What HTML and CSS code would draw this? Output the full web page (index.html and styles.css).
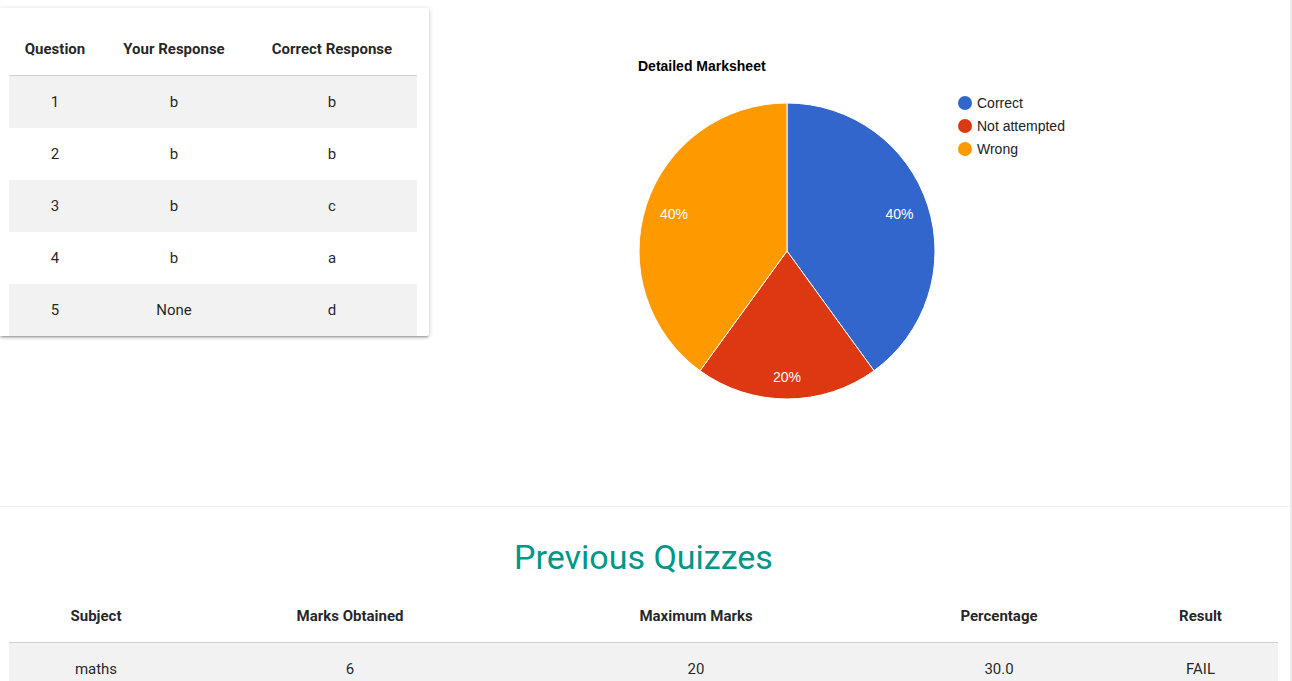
FILE: index.html
```html
<!DOCTYPE html>
<html>
<head>
<meta charset="utf-8">
<title>Result</title>
<link rel="stylesheet" href="styles.css">
</head>
<body>
<div class="page">
  <section class="top">
    <div class="card">
      <table class="qtable">
        <colgroup><col class="c1"><col class="c2"><col class="c3"></colgroup>
        <thead>
          <tr><th>Question</th><th>Your Response</th><th>Correct Response</th></tr>
        </thead>
        <tbody>
          <tr class="odd"><td>1</td><td>b</td><td>b</td></tr>
          <tr><td>2</td><td>b</td><td>b</td></tr>
          <tr class="odd"><td>3</td><td>b</td><td>c</td></tr>
          <tr><td>4</td><td>b</td><td>a</td></tr>
          <tr class="odd"><td>5</td><td>None</td><td>d</td></tr>
        </tbody>
      </table>
    </div>
    <div class="chart">
      <svg class="chart-svg" width="861" height="500" viewBox="0 0 861 500">
        <text class="ch-title" x="209" y="71">Detailed Marksheet</text>
        <g stroke="#ffffff" stroke-width="1">
          <path d="M358 251 L358 103 A148 148 0 0 1 444.99 370.73 Z" fill="#3366cc"/>
          <path d="M358 251 L444.99 370.73 A148 148 0 0 1 271.01 370.73 Z" fill="#dc3912"/>
          <path d="M358 251 L271.01 370.73 A148 148 0 0 1 358 103 Z" fill="#ff9900"/>
        </g>
        <text class="ch-pct" x="470.5" y="219" text-anchor="middle">40%</text>
        <text class="ch-pct" x="358" y="382" text-anchor="middle">20%</text>
        <text class="ch-pct" x="245" y="219" text-anchor="middle">40%</text>
        <circle cx="536" cy="103" r="7" fill="#3366cc"/>
        <circle cx="536" cy="126" r="7" fill="#dc3912"/>
        <circle cx="536" cy="149" r="7" fill="#ff9900"/>
        <text class="ch-leg" x="548" y="108">Correct</text>
        <text class="ch-leg" x="548" y="131">Not attempted</text>
        <text class="ch-leg" x="548" y="154">Wrong</text>
      </svg>
    </div>
  </section>
  <section class="bottom">
    <h4 class="heading">Previous Quizzes</h4>
    <table class="ptable">
      <colgroup><col class="p1"><col class="p2"><col class="p3"><col class="p4"><col class="p5"></colgroup>
      <thead>
        <tr><th>Subject</th><th>Marks Obtained</th><th>Maximum Marks</th><th>Percentage</th><th>Result</th></tr>
      </thead>
      <tbody>
        <tr class="odd"><td>maths</td><td>6</td><td>20</td><td>30.0</td><td>FAIL</td></tr>
      </tbody>
    </table>
  </section>
</div>
</body>
</html>
```
FILE: styles.css
```css
html, body {
  margin: 0;
  padding: 0;
  background: #ffffff;
}
body {
  font-family: Roboto, "Liberation Sans", sans-serif;
  color: rgba(0, 0, 0, 0.87);
  overflow: hidden;
}
.page {
  width: 1290px;
  border-right: 2px solid #ededed;
  min-height: 681px;
}
.top {
  display: flex;
  align-items: flex-start;
  height: 506px;
  border-bottom: 1px solid #f1f1f1;
}
.card {
  margin-top: 8px;
  width: 408px;
  padding: 15px 12px 0 9px;
  background: #fff;
  border-radius: 0 2px 2px 0;
  box-shadow: 0 2px 2px 0 rgba(0,0,0,.14), 0 3px 1px -2px rgba(0,0,0,.12), 0 1px 5px 0 rgba(0,0,0,.2);
  flex: none;
}
table {
  border-collapse: collapse;
  table-layout: fixed;
  font-size: 15px;
}
.qtable { width: 408px; }
.c1 { width: 92px; }
.c2 { width: 146px; }
.c3 { width: 170px; }
th, td {
  text-align: center;
  padding: 0 5px;
  white-space: nowrap;
}
th {
  font-weight: 700;
}
.qtable th, .qtable td { height: 52px; }
thead tr { border-bottom: 1px solid #d0d0d0; }
tr.odd { background: #f2f2f2; }
.chart {
  flex: 1;
}
.chart-svg { display: block; }
.ch-title {
  font-family: "Liberation Sans", Arial, sans-serif;
  font-size: 14px;
  font-weight: 700;
  fill: #000;
}
.ch-pct {
  font-family: "Liberation Sans", Arial, sans-serif;
  font-size: 14px;
  fill: #ffffff;
}
.ch-leg {
  font-family: "Liberation Sans", Arial, sans-serif;
  font-size: 14px;
  fill: #222222;
}
.bottom {
  padding: 0 12px 0 9px;
}
.heading {
  margin: 32px 0 12px;
  font-size: 34px;
  line-height: 37px;
  font-weight: 400;
  color: #009688;
  text-align: center;
}
.ptable { width: 1269px; }
.p1 { width: 174px; }
.p2 { width: 334px; }
.p3 { width: 358px; }
.p4 { width: 248px; }
.p5 { width: 155px; }
.ptable th { height: 53px; padding-top: 1px; }
.ptable td { height: 52px; }
```
